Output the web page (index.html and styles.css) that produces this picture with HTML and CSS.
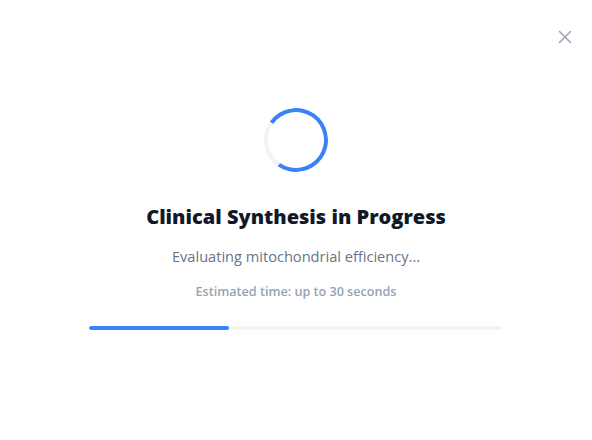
FILE: index.html
```html
<!DOCTYPE html>
<html lang="en">
<head>
<meta charset="utf-8">
<title>Clinical Synthesis</title>
<link rel="stylesheet" href="styles.css">
</head>
<body>
<div class="modal">
  <button class="close" aria-label="Close">
    <svg width="14" height="14" viewBox="0 0 14 14" fill="none" stroke="currentColor" stroke-width="1.5" stroke-linecap="round">
      <path d="M1.5 1.5 L12.5 12.5 M12.5 1.5 L1.5 12.5"/>
    </svg>
  </button>
  <div class="content">
    <div class="spinner"></div>
    <h1 class="title">Clinical Synthesis in Progress</h1>
    <p class="status">Evaluating mitochondrial efficiency...</p>
    <p class="estimate">Estimated time: up to 30 seconds</p>
    <div class="track"><div class="fill" style="width: 34%"></div></div>
  </div>
</div>
</body>
</html>
```
FILE: styles.css
```css
* { box-sizing: border-box; }
html, body { margin: 0; padding: 0; }
body {
  width: 592px;
  height: 440px;
  background: #ffffff;
  font-family: "Open Sans", "Noto Sans", sans-serif;
}
.modal {
  position: relative;
  width: 100%;
  height: 100%;
  background: #ffffff;
}
.close {
  position: absolute;
  top: 30px;
  right: 20px;
  width: 14px;
  height: 14px;
  padding: 0;
  border: 0;
  background: none;
  color: #9ca3af;
  display: flex;
}
.content {
  display: flex;
  flex-direction: column;
  align-items: center;
  padding-top: 108px;
}
.spinner {
  width: 64px;
  height: 64px;
  border-radius: 50%;
  border: 4px solid #3b82f6;
  border-left-color: #f1f3f6;
  transform: rotate(-10deg);
}
.title {
  margin: 31px 0 0;
  font-size: 20px;
  line-height: 28px;
  font-weight: 800;
  color: #111827;
}
.status {
  margin: 15px 0 0;
  font-size: 14.6px;
  line-height: 20px;
  color: #64748b;
}
.estimate {
  margin: 18px 0 0;
  font-size: 12.6px;
  line-height: 16px;
  font-weight: 600;
  color: #94a3b8;
}
.track {
  margin: 26px 2px 0 0;
  width: 413px;
  height: 4px;
  border-radius: 2px;
  background: #f3f4f6;
  overflow: hidden;
}
.fill {
  height: 100%;
  border-radius: 2px;
  background: #3b82f6;
}
```
